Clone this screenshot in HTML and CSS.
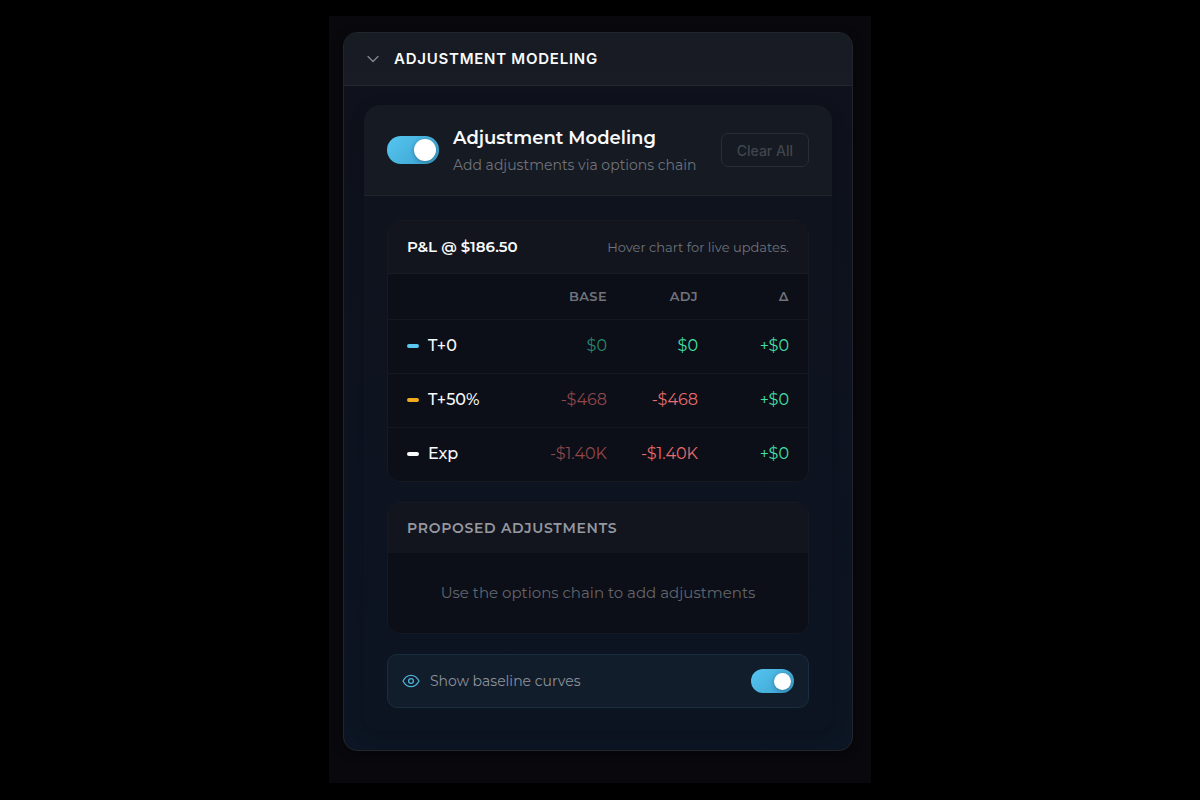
FILE: index.html
```html
<!DOCTYPE html>
<html lang="en">

<head>
    <meta charset="UTF-8">
    <meta name="viewport" content="width=device-width, initial-scale=1.0">
    <title>Adjustment Modeling</title>
    <link rel="stylesheet" href="styles.css">
</head>

<body>
    <main class="sidebar">
        <section class="card">
            <h1 class="card-header">
                <button class="collapse" type="button" aria-expanded="true">
                    <svg class="chevron" viewBox="0 0 14 14" aria-hidden="true">
                        <path d="M2 4.5 L7 9.5 L12 4.5" />
                    </svg>
                    Adjustment Modeling
                </button>
            </h1>

            <div class="card-body">
                <div class="panel">
                    <header class="panel-header">
                        <input type="checkbox" id="modeling" class="toggle" checked>
                        <label for="modeling" class="panel-label">
                            <span class="panel-title">Adjustment Modeling</span>
                            <span class="panel-subtitle">Add adjustments via options chain</span>
                        </label>
                        <button class="clear" type="button" disabled>Clear All</button>
                    </header>

                    <div class="panel-body">
                        <div class="box">
                            <div class="box-header pnl-header">
                                <h2 class="pnl-title">P&amp;L @ $186.50</h2>
                                <span class="hint">Hover chart for live updates.</span>
                            </div>
                            <table class="pnl-table">
                                <thead>
                                    <tr>
                                        <td></td>
                                        <th class="col-base" scope="col">BASE</th>
                                        <th class="col-value" scope="col">ADJ</th>
                                        <th class="col-value" scope="col">Δ</th>
                                    </tr>
                                </thead>
                                <tbody>
                                    <tr>
                                        <th scope="row"><span class="dash dash-blue"></span>T+0</th>
                                        <td class="gain base">$0</td>
                                        <td class="gain">$0</td>
                                        <td class="gain">+$0</td>
                                    </tr>
                                    <tr>
                                        <th scope="row"><span class="dash dash-orange"></span>T+50%</th>
                                        <td class="loss base">-$468</td>
                                        <td class="loss">-$468</td>
                                        <td class="gain">+$0</td>
                                    </tr>
                                    <tr>
                                        <th scope="row"><span class="dash dash-white"></span>Exp</th>
                                        <td class="loss base">-$1.40K</td>
                                        <td class="loss">-$1.40K</td>
                                        <td class="gain">+$0</td>
                                    </tr>
                                </tbody>
                            </table>
                        </div>

                        <div class="box">
                            <h2 class="box-header proposed-title">Proposed Adjustments</h2>
                            <p class="empty">Use the options chain to add adjustments</p>
                        </div>

                        <div class="baseline">
                            <svg class="eye" viewBox="0 0 18 18" aria-hidden="true">
                                <path d="M1 9 C3 5 5.8 3.3 9 3.3 S15 5 17 9 C15 13 12.2 14.7 9 14.7 S3 13 1 9 Z" />
                                <circle cx="9" cy="9" r="2.4" />
                            </svg>
                            <label for="baseline">Show baseline curves</label>
                            <input type="checkbox" id="baseline" class="toggle toggle-small" checked>
                        </div>
                    </div>
                </div>
            </div>
        </section>
    </main>
</body>

</html>
```

FILE: styles.css
```css
* {
    box-sizing: border-box;
}

body {
    margin: 0;
    padding: 16px;
    background-color: #000;
    color: #f8fafc;
    font-family: Montserrat, Inter, sans-serif;
    font-size: 14px;
    line-height: 20px;
}

h1,
h2,
p {
    margin: 0;
}

button {
    font-family: Inter, sans-serif;
}

.sidebar {
    max-width: 542px;
    margin: 0 auto;
    padding: 16px 18px 32px 14px;
    background-color: #09090d;
}

.card {
    border: 1px solid #23252e;
    border-radius: 14px;
    background: linear-gradient(180deg, #0f111b, #0c1523);
    box-shadow: 0 2px 8px rgba(0, 0, 0, 0.5);
    overflow: hidden;
}

.card-header {
    border-bottom: 1px solid #23262f;
    background: linear-gradient(180deg, #171b22, #191b25);
}

.collapse {
    display: flex;
    align-items: center;
    gap: 14px;
    width: 100%;
    padding: 16px 22px;
    border: none;
    background: none;
    color: #f8fafc;
    font-size: 15px;
    font-weight: 600;
    line-height: 20px;
    letter-spacing: 0.05em;
    text-transform: uppercase;
    cursor: pointer;
}

.chevron {
    width: 14px;
    height: 14px;
    fill: none;
    stroke: #858890;
    stroke-width: 1.3;
    stroke-linecap: round;
    stroke-linejoin: round;
}

.card-body {
    padding: 19px 20px;
}

.panel {
    border-radius: 16px;
    background: linear-gradient(180deg, #10131d, #0c1422);
    box-shadow: 0 4px 16px rgba(0, 0, 0, 0.2);
    overflow: hidden;
}

.panel-header {
    display: flex;
    align-items: center;
    gap: 14px;
    padding: 20px 23px;
    border-bottom: 1px solid #20242c;
    background-color: #161a22;
}

.panel-label {
    flex: 1;
    display: flex;
    flex-direction: column;
    gap: 4px;
}

.panel-title {
    font-size: 18px;
    font-weight: 600;
    line-height: 26px;
}

.panel-subtitle {
    color: #70737b;
}

.toggle {
    appearance: none;
    flex: none;
    display: flex;
    align-items: center;
    justify-content: flex-end;
    width: 52px;
    height: 28px;
    margin: 0;
    padding: 0 3px;
    border-radius: 14px;
    background: linear-gradient(135deg, #56c6f2, #3a9fcb);
    cursor: pointer;
}

.toggle::before {
    content: "";
    width: 22px;
    height: 22px;
    border-radius: 50%;
    background-color: #fff;
    box-shadow: 0 1px 4px rgba(0, 0, 0, 0.3);
}

.toggle:not(:checked) {
    justify-content: flex-start;
    background: #2a2e38;
}

.toggle-small {
    width: 43px;
    height: 24px;
}

.toggle-small::before {
    width: 17px;
    height: 17px;
}

.clear {
    height: 34px;
    padding: 0 15px;
    border: 1px solid #292d35;
    border-radius: 7px;
    background: none;
    color: #41454d;
    font-size: 14px;
    font-weight: 500;
}

.panel-body {
    display: flex;
    flex-direction: column;
    gap: 20px;
    padding: 24px 23px 23px;
}

.box {
    border: 1px solid #151922;
    border-radius: 12px;
    background-color: #0c0f17;
    overflow: hidden;
}

.box-header {
    padding: 15px 19px;
    background-color: #12151d;
}

.pnl-header {
    display: flex;
    align-items: center;
    justify-content: space-between;
    padding: 16px 19px;
    border-bottom: 1px solid #181c24;
}

.pnl-title {
    font-size: 15px;
    font-weight: 600;
}

.hint {
    color: #70737b;
    font-size: 13px;
}

.pnl-table {
    width: 100%;
    border-collapse: collapse;
    table-layout: fixed;
    font-size: 16px;
}

.pnl-table th,
.pnl-table td {
    height: 54px;
    padding: 0 19px 0 10px;
    border-top: 1px solid #141821;
    font-weight: 400;
    text-align: right;
    white-space: nowrap;
}

.pnl-table thead th,
.pnl-table thead td {
    height: 45px;
    border-top: none;
    color: #70737b;
    font-size: 13px;
    font-weight: 600;
    letter-spacing: 0.03em;
}

.pnl-table tbody th {
    padding-left: 19px;
    font-weight: 500;
    text-align: left;
}

.col-base {
    width: 104px;
}

.col-value {
    width: 91px;
}

.dash {
    display: inline-block;
    width: 12px;
    height: 4px;
    margin-right: 9px;
    border-radius: 2px;
    vertical-align: 3px;
}

.dash-blue {
    background-color: #5bc8ee;
}

.dash-orange {
    background-color: #f0aa1c;
}

.dash-white {
    background-color: #f8fafc;
}

.gain {
    color: #43e0aa;
}

.loss {
    color: #ea6c6e;
}

.gain.base {
    color: #27896e;
}

.loss.base {
    color: #91474c;
}

.proposed-title {
    color: #9698a0;
    font-size: 14px;
    font-weight: 600;
    letter-spacing: 0.05em;
    text-transform: uppercase;
}

.empty {
    padding: 30px 19px;
    color: #62656d;
    font-size: 15px;
    text-align: center;
}

.baseline {
    display: flex;
    align-items: center;
    gap: 10px;
    padding: 14px;
    border: 1px solid #1b2e3f;
    border-radius: 10px;
    background-color: #121d2b;
    color: #8c929c;
    line-height: 24px;
}

.baseline label {
    flex: 1;
}

.eye {
    width: 18px;
    height: 18px;
    fill: none;
    stroke: #4daed6;
    stroke-width: 1.3;
    stroke-linejoin: round;
}
```
